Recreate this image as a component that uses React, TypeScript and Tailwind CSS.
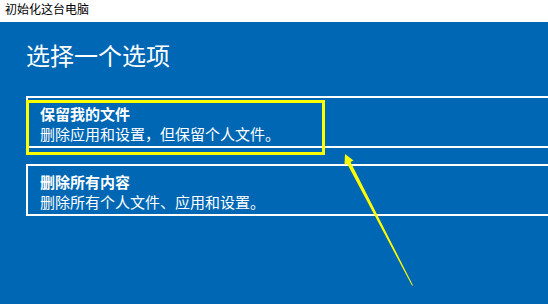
import React from 'react';

const options = [
  { title: '保留我的文件', desc: '删除应用和设置，但保留个人文件。' },
  { title: '删除所有内容', desc: '删除所有个人文件、应用和设置。' },
];

export default function App() {
  return (
    <div
      className="relative flex h-[304px] w-[548px] flex-col overflow-hidden"
      style={{ fontFamily: '"Noto Sans CJK SC", "Noto Sans", sans-serif' }}
    >
      <div className="h-[22px] bg-white pl-[5px] pt-[1px] text-[12px] leading-[16px] text-black">
        初始化这台电脑
      </div>

      <div className="flex flex-1 flex-col bg-[#0067b4] pl-[26px] text-white">
        <h1 className="pt-[17px] text-[24px] leading-[32px] font-normal">选择一个选项</h1>

        <div className="mt-[25px] flex flex-col gap-[16px]">
          {options.map((opt) => (
            <div
              key={opt.title}
              className="h-[52px] w-[540px] border-2 border-white pl-[12px] pt-[6px] text-[15px] leading-[20px]"
            >
              <div className="font-bold">{opt.title}</div>
              <div>{opt.desc}</div>
            </div>
          ))}
        </div>
      </div>

      {/* highlight box + arrow annotation */}
      <div className="pointer-events-none absolute left-[26px] top-[100px] h-[55px] w-[299px] border-[3px] border-[#ffff00]" />
      <svg
        className="pointer-events-none absolute left-0 top-0"
        width="548"
        height="304"
        viewBox="0 0 548 304"
      >
        <polygon points="345,154 353.5,160.5 350.5,162 413,285.5 412,285.5 347,163.5 344.5,165" fill="#ffff00" />
      </svg>
    </div>
  );
}
